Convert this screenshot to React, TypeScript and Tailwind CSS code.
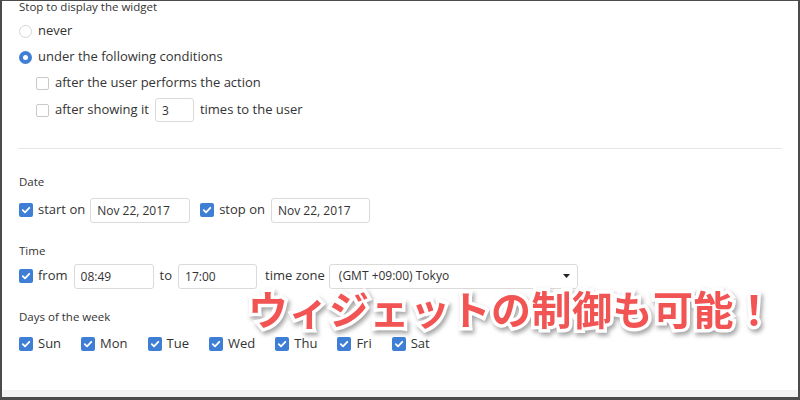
import React from "react"

const DAYS = ["Sun", "Mon", "Tue", "Wed", "Thu", "Fri", "Sat"]

function Check({ checked = false }: { checked?: boolean }) {
  if (!checked) {
    return <span className="block h-[13px] w-[13px] shrink-0 rounded-[2px] border border-[#c9c9c9] bg-white" />
  }
  return (
    <span className="flex h-[14px] w-[14px] shrink-0 items-center justify-center rounded-[2px] bg-[#3e7fd5]">
      <svg width="10" height="10" viewBox="0 0 10 10">
        <path d="M1.8 5.2 L4 7.3 L8.3 2.8" fill="none" stroke="#fff" strokeWidth="1.8" strokeLinecap="round" strokeLinejoin="round" />
      </svg>
    </span>
  )
}

function Radio({ checked = false }: { checked?: boolean }) {
  return checked ? (
    <span className="block h-[13px] w-[13px] shrink-0 rounded-full border-[4px] border-[#3e7fd5] bg-white" />
  ) : (
    <span className="block h-[13px] w-[13px] shrink-0 rounded-full border border-[#d6d6d6] bg-white" />
  )
}

function Field({ value, w }: { value: string; w: string }) {
  return (
    <input
      readOnly
      value={value}
      className={`h-[25px] ${w} rounded-[3px] border border-[#dadada] bg-white px-[6px] text-[12px] text-[#333] outline-none`}
    />
  )
}

export default function App() {
  return (
    <div className="relative flex h-[400px] w-[800px] flex-col overflow-hidden border-x-2 border-t border-b-[3px] border-[#4b4b4b] bg-white font-['Open_Sans','Liberation_Sans',sans-serif] text-[#333]">
      <div className="flex-1 pl-[17px]">
        {/* Stop conditions */}
        <div className="text-[11.5px] leading-[11px]">Stop to display the widget</div>
        <div className="mt-[6px] text-[13px]">
          <div className="flex h-[26px] items-center gap-[6px]">
            <Radio />
            <span>never</span>
          </div>
          <div className="flex h-[26px] items-center gap-[6px]">
            <Radio checked />
            <span>under the following conditions</span>
          </div>
          <div className="flex h-[26px] items-center gap-[6px] pl-[17px]">
            <Check />
            <span>after the user performs the action</span>
          </div>
          <div className="flex h-[28px] items-center gap-[6px] pl-[17px]">
            <Check />
            <span>after showing it</span>
            <input
              readOnly
              value="3"
              className="h-[24px] w-[39px] rounded-[3px] border border-[#dadada] px-[6px] text-[12px] outline-none"
            />
            <span>times to the user</span>
          </div>
        </div>

        <div className="ml-[-1px] mt-[24px] h-px w-[764px] bg-[#e6e6e6]" />

        {/* Date */}
        <div className="mt-[26px] text-[11.5px] leading-[14px]">Date</div>
        <div className="mt-[8px] flex h-[26px] items-center text-[13px]">
          <Check checked />
          <span className="ml-[5px] mr-[5px]">start on</span>
          <Field value="Nov 22, 2017" w="w-[100px]" />
          <span className="ml-[10px]">
            <Check checked />
          </span>
          <span className="ml-[5px] mr-[6px]">stop on</span>
          <Field value="Nov 22, 2017" w="w-[99px]" />
        </div>

        {/* Time */}
        <div className="mt-[21px] text-[11.5px] leading-[14px]">Time</div>
        <div className="mt-[5px] flex h-[26px] items-center text-[13px]">
          <Check checked />
          <span className="ml-[5px] mr-[6px]">from</span>
          <Field value="08:49" w="w-[80px]" />
          <span className="mx-[6px]">to</span>
          <Field value="17:00" w="w-[79px]" />
          <span className="ml-[8px] mr-[4px]">time zone</span>
          <div className="flex h-[25px] w-[249px] items-center justify-between rounded-[3px] border border-[#dadada] bg-white pl-[9px] pr-[7px] text-[12px]">
            <span>(GMT +09:00) Tokyo</span>
            <svg width="7" height="4" viewBox="0 0 7 4">
              <path d="M0 0 H7 L3.5 4 Z" fill="#222" />
            </svg>
          </div>
        </div>

        {/* Days */}
        <div className="mt-[21px] text-[11.5px] leading-[14px]">Days of the week</div>
        <div className="mt-[7px] flex h-[26px] items-center gap-[20px] text-[13px]">
          {DAYS.map((d) => (
            <div key={d} className="flex items-center gap-[5px]">
              <Check checked />
              <span>{d}</span>
            </div>
          ))}
        </div>
      </div>
      <div className="h-[7px] bg-[#f2f2f2]" />

      {/* caption overlay */}
      <div className="absolute left-[246px] top-[287px] whitespace-nowrap font-['Noto_Sans_CJK_JP',sans-serif] text-[40px] font-bold leading-none tracking-[0.5px] text-[#f25353] [-webkit-text-stroke:7px_#fff] [paint-order:stroke_fill] drop-shadow-[2px_3px_2px_rgba(0,0,0,0.35)]">
        ウィジェットの制御も可能！
      </div>
    </div>
  )
}
